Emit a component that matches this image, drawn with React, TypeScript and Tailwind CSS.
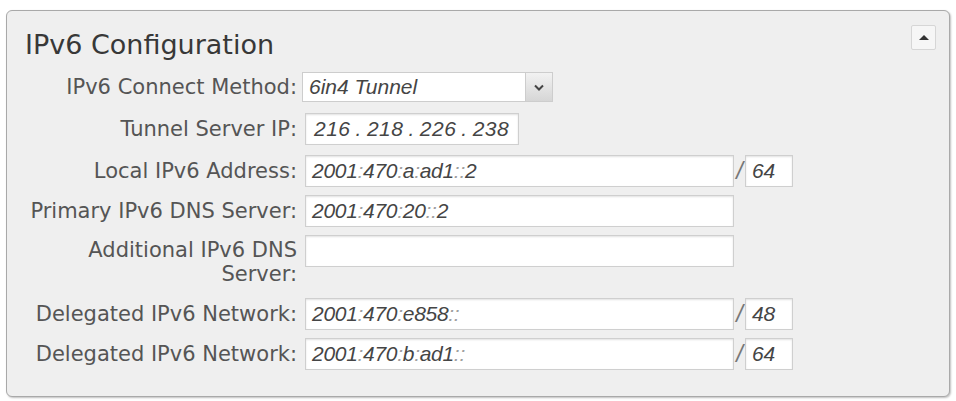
const rows = [
  { label: "Local IPv6 Address:", value: "2001:470:a:ad1::2", prefix: "64", mt: "mt-[10px]" },
  { label: "Primary IPv6 DNS Server:", value: "2001:470:20::2", prefix: null, mt: "mt-[8px]" },
];

const delegated = [
  { value: "2001:470:e858::", prefix: "48", mt: "mt-[15px]" },
  { value: "2001:470:b:ad1::", prefix: "64", mt: "mt-[8px]" },
];

function Addr({ value }: { value: string }) {
  // colons are lighter than the digits in the original
  const parts = value.split(/(:)/);
  return (
    <span>
      {parts.map((p, i) =>
        p === ":" ? (
          <span key={i} className="text-[#a0a0a0]">:</span>
        ) : (
          <span key={i}>{p}</span>
        )
      )}
    </span>
  );
}

function Field({ value, wide = true }: { value?: string; wide?: boolean }) {
  return (
    <div
      className={`${wide ? "w-[429px]" : "w-[48px]"} h-[32px] bg-white border border-[#cfcfcf] shadow-[inset_0_1px_2px_rgba(0,0,0,0.12)] flex items-center pl-[6px] italic text-[21px] tracking-[-0.3px] text-[#454545] font-['Liberation_Sans',sans-serif]`}
    >
      {value ? <Addr value={value} /> : null}
    </div>
  );
}

function Label({ children, extra = "" }: { children: React.ReactNode; extra?: string }) {
  return (
    <div className={`w-[291px] shrink-0 text-right pr-[1px] text-[21px] leading-[21px] text-[#555] font-['DejaVu_Sans',sans-serif] ${extra}`}>
      {children}
    </div>
  );
}

function Prefix({ value }: { value: string }) {
  return (
    <div className="flex items-center -ml-[7px]">
      <span className="w-[11px] text-center italic text-[24px] text-[#777] font-['Liberation_Sans',sans-serif] leading-none">/</span>
      <Field value={value} wide={false} />
    </div>
  );
}

export default function App() {
  return (
    <div className="w-[956px] h-[401px] bg-white pt-[10px] pl-[6px]">
      <div className="relative w-[944px] h-[387px] bg-[#efefef] border border-[#a9a9a9] rounded-[6px] shadow-[1px_1px_2px_rgba(0,0,0,0.25)]">
        {/* collapse toggle */}
        <button className="absolute right-[13px] top-[14px] w-[25px] h-[25px] bg-[#f6f6f6] border border-[#d6d6d6] rounded-[2px] flex items-center justify-center">
          <span className="block w-0 h-0 border-l-[5px] border-r-[5px] border-b-[5px] border-l-transparent border-r-transparent border-b-[#333]" />
        </button>

        <h2 className="pl-[18px] pt-[19px] text-[27px] leading-[30px] text-[#383838] font-['DejaVu_Sans',sans-serif]">
          IPv6 Configuration
        </h2>

        <div className="flex flex-col mt-[12px]">
          {/* connect method */}
          <div className="flex items-center gap-[4px]">
            <Label>IPv6 Connect Method:</Label>
            <div className="flex w-[251px] h-[30px] border border-[#cdcdcd] bg-white">
              <div className="flex-1 flex items-center pl-[6px] italic text-[21px] text-[#454545] font-['Liberation_Sans',sans-serif]">
                6in4 Tunnel
              </div>
              <div className="w-[27px] bg-gradient-to-b from-[#f2f2f2] to-[#d6d6d6] border-l border-[#cdcdcd] flex items-center justify-center">
                <svg width="10" height="7" viewBox="0 0 10 7">
                  <path d="M1 1.5 L5 5.5 L9 1.5" fill="none" stroke="#444" strokeWidth="2" />
                </svg>
              </div>
            </div>
          </div>

          {/* tunnel server ip */}
          <div className="flex items-center gap-[7px] mt-[11px]">
            <Label>Tunnel Server IP:</Label>
            <div className="w-[214px] h-[32px] bg-white border border-[#cfcfcf] shadow-[inset_0_1px_2px_rgba(0,0,0,0.12)] flex items-center pl-[8px] italic text-[21px] tracking-[0.5px] text-[#454545] font-['Liberation_Sans',sans-serif]">
              216<span className="px-[5px]">.</span>218<span className="px-[5px]">.</span>226<span className="px-[5px]">.</span>238
            </div>
          </div>

          {rows.map((r) => (
            <div key={r.label} className={`flex items-center gap-[7px] ${r.mt}`}>
              <Label>{r.label}</Label>
              <Field value={r.value} />
              {r.prefix ? <Prefix value={r.prefix} /> : null}
            </div>
          ))}

          {/* additional dns, label wraps */}
          <div className="flex items-start gap-[7px] mt-[8px]">
            <Label extra="pt-[3px] !leading-[24px]">
              Additional IPv6 DNS
              <br />
              Server:
            </Label>
            <Field />
          </div>

          {delegated.map((d, i) => (
            <div key={i} className={`flex items-center gap-[7px] ${i === 0 ? "mt-[12px]" : d.mt}`}>
              <Label>Delegated IPv6 Network:</Label>
              <Field value={d.value} />
              <Prefix value={d.prefix} />
            </div>
          ))}
        </div>
      </div>
    </div>
  );
}
